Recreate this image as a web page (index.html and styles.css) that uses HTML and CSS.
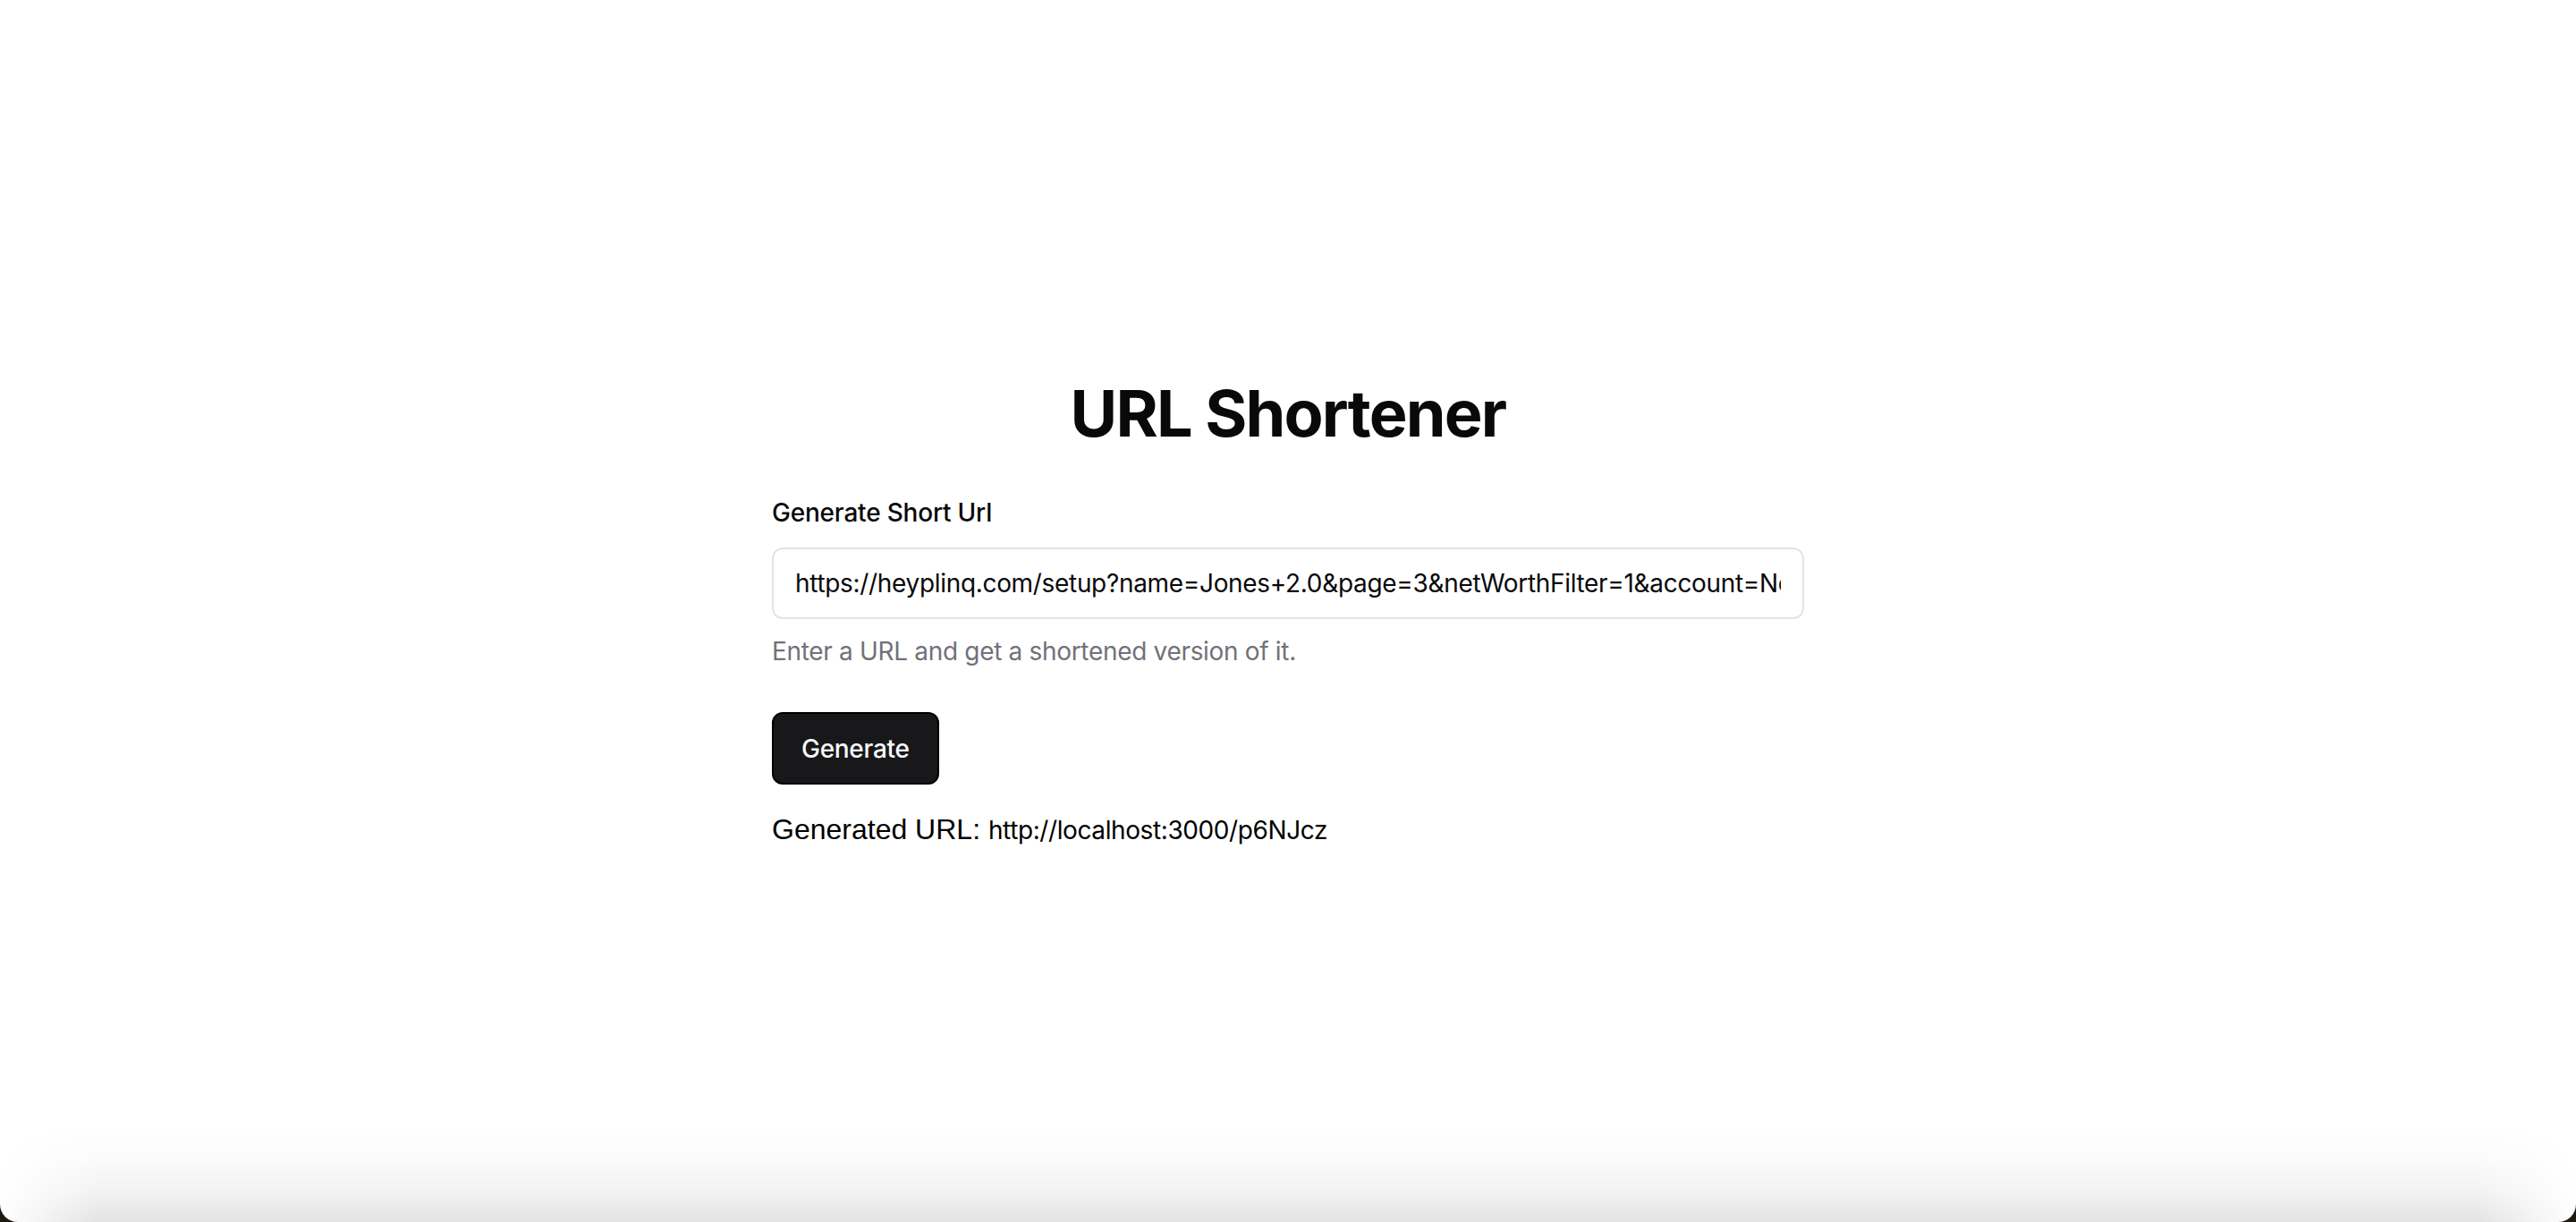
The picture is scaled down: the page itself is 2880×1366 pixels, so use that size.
FILE: index.html
```html
<!DOCTYPE html>
<html lang="en">
<head>
<meta charset="utf-8">
<title>URL Shortener</title>
<link rel="stylesheet" href="styles.css">
</head>
<body>
<div class="window">
  <main class="content">
    <h1 class="title">URL Shortener</h1>
    <form class="form">
      <div class="field">
        <label class="label" for="url">Generate Short Url</label>
        <input class="input" id="url" type="text" value="https://heyplinq.com/setup?name=Jones+2.0&amp;page=3&amp;netWorthFilter=1&amp;account=New+Account&amp;ref=home">
        <p class="hint">Enter a URL and get a shortened version of it.</p>
      </div>
      <button class="button" type="button">Generate</button>
    </form>
    <p class="result">Generated URL: <a class="result-link" href="#">http://localhost:3000/p6NJcz</a></p>
  </main>
  <div class="shade"></div>
</div>
</body>
</html>
```
FILE: styles.css
```css
html, body {
  margin: 0;
  padding: 0;
}
body {
  background: #1c1a12;
  font-family: Inter, "Noto Sans", sans-serif;
  color: #09090b;
}
.window {
  position: relative;
  height: 1366px;
  background: #ffffff;
  border-radius: 0 0 20px 20px;
  overflow: hidden;
  display: flex;
  flex-direction: column;
  align-items: center;
  justify-content: center;
}
.content {
  width: 1154px;
  margin-top: 8px;
}
.title {
  margin: 0 0 51px;
  text-align: center;
  font-size: 72px;
  line-height: 80px;
  font-weight: 700;
  letter-spacing: -1.8px;
  color: #09090b;
}
.form {
  display: flex;
  flex-direction: column;
  align-items: flex-start;
  gap: 48px;
}
.field {
  display: flex;
  flex-direction: column;
  gap: 16px;
  width: 100%;
}
.label {
  font-size: 28px;
  line-height: 40px;
  font-weight: 500;
  letter-spacing: -0.2px;
  color: #09090b;
}
.input {
  box-sizing: border-box;
  width: 100%;
  height: 80px;
  margin: 3px 0 0;
  padding: 0 24px;
  border: 2px solid #e4e4e7;
  border-radius: 12px;
  background: #fff;
  font-family: Inter, "Noto Sans", sans-serif;
  font-size: 28px;
  letter-spacing: -0.32px;
  color: #09090b;
  outline: none;
}
.hint {
  margin: 0;
  font-size: 28px;
  line-height: 40px;
  letter-spacing: -0.32px;
  color: #71717a;
}
.button {
  height: 81px;
  padding: 0 31px;
  border: 2px solid #000;
  border-radius: 12px;
  background: #18181b;
  color: #fafafa;
  font-family: Inter, "Noto Sans", sans-serif;
  font-size: 28px;
  font-weight: 500;
  letter-spacing: -0.3px;
}
.result {
  margin: 26px 0 0;
  font-family: "Liberation Sans", Arial, sans-serif;
  font-size: 32px;
  line-height: 48px;
  color: #000;
}
.result-link {
  font-family: Inter, "Noto Sans", sans-serif;
  font-size: 28px;
  letter-spacing: -0.4px;
  color: #000;
  text-decoration: none;
}
.shade {
  position: absolute;
  left: 0;
  right: 0;
  bottom: 0;
  height: 110px;
  pointer-events: none;
  background: linear-gradient(to bottom, rgba(0,0,0,0) 0%, rgba(0,0,0,0.015) 35%, rgba(0,0,0,0.05) 70%, rgba(0,0,0,0.11) 100%);
  -webkit-mask-image: linear-gradient(to right, transparent 0, #000 110px, #000 calc(100% - 110px), transparent 100%);
  mask-image: linear-gradient(to right, transparent 0, #000 110px, #000 calc(100% - 110px), transparent 100%);
}
```
